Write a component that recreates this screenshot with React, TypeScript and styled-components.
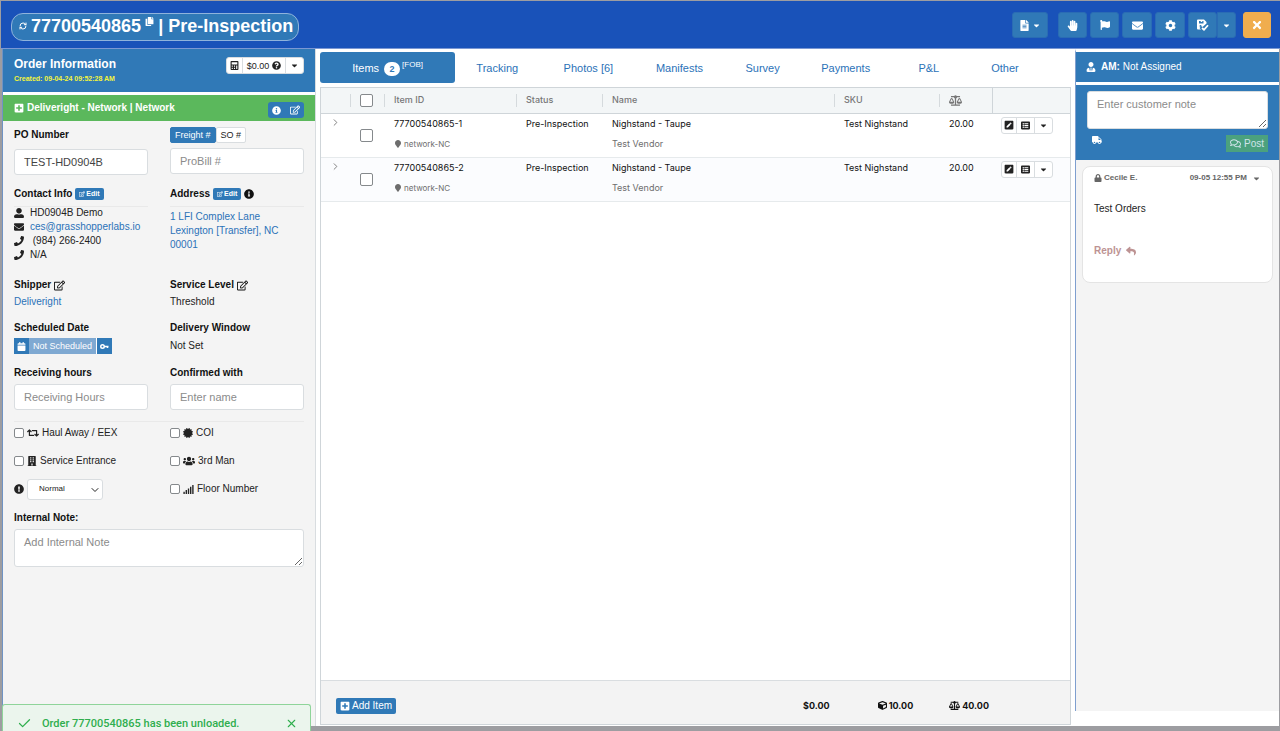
import React from 'react';
import styled, { createGlobalStyle } from 'styled-components';
import {
  FaCopy, FaFileAlt, FaCaretDown, FaHandPaper, FaFlag, FaEnvelope, FaCog, FaTimes, FaCalculator,
  FaQuestionCircle, FaPlusSquare, FaInfoCircle, FaRegEdit, FaUserAlt, FaUserTie, FaPhone, FaCalendar, FaRetweet,
  FaCertificate, FaBuilding, FaUsers, FaSignal, FaExclamationCircle, FaBalanceScale, FaMapMarker,
  FaPenSquare, FaListAlt, FaCube, FaTruck, FaRegComments, FaLock, FaReply,
} from 'react-icons/fa';
import { LuRefreshCw, LuChevronRight, LuChevronDown, LuCheck, LuX } from 'react-icons/lu';

const blue = '#3079b7';
const line = '#d9dde0';

const GlobalStyle = createGlobalStyle`
  *, *::before, *::after { box-sizing: border-box; }
  body { margin: 0; background: #9d9da1; }
  body, button, input, textarea, select {
    font-family: "Liberation Sans", Arial, sans-serif;
    font-size: 10px;
    line-height: 14px;
    color: #222;
  }
  button { cursor: pointer; }
  a { color: #2b72b8; text-decoration: none; }
  svg { flex: none; }
`;

const Page = styled.div`
  display: flex;
  flex-direction: column;
  min-height: 100vh;
  padding: 1px 0 5px 1px;
`;

const TopBar = styled.header`
  display: flex;
  align-items: center;
  justify-content: space-between;
  height: 48px;
  padding: 0 9px 0 10px;
  background: #1952b9;
  border-bottom: 1px solid #7b98d3;
`;

const TitlePill = styled.h1`
  display: flex;
  align-items: center;
  gap: 4px;
  height: 28px;
  margin: 4px 0 0;
  padding: 0 5px 2px 7px;
  border: 1px solid #8fb3dc;
  border-radius: 12px;
  background: ${blue};
  color: #fff;
  font-size: 18px;
  line-height: 24px;
`;

const IconButton = styled.button`
  display: flex;
  padding: 0;
  border: 0;
  background: none;
  color: inherit;
`;

const CopyButton = styled(IconButton)`
  align-self: flex-start;
  margin-top: 3px;
`;

const Toolbar = styled.div`
  display: flex;
  gap: 3px;
  margin-top: 1px;
`;

const ToolButton = styled.button<{ $tone?: string; $width?: number }>`
  display: flex;
  align-items: center;
  justify-content: center;
  gap: 2px;
  width: ${(p) => p.$width ?? 29}px;
  height: 26px;
  padding: 0;
  border: 1px solid ${(p) => p.$tone ?? '#2a6cb4'};
  border-radius: 3px;
  background: ${(p) => p.$tone ?? blue};
  color: #fff;
`;

const ToolGroup = styled.div<{ $after?: number }>`
  display: flex;
  margin-right: ${(p) => p.$after ?? 0}px;
  ${ToolButton} + ${ToolButton} { border-radius: 0 3px 3px 0; }
`;

const Workspace = styled.div`
  display: flex;
  flex: 1;
  margin: 0 1px;
  background: #fff;
`;

const OrderPanel = styled.aside`
  display: flex;
  flex-direction: column;
  width: 314px;
  border-left: 1px solid #6f93c4;
  border-right: 1px solid ${line};
  background: #f4f4f4;
`;

const OrderHead = styled.div`
  display: flex;
  justify-content: space-between;
  height: 43px;
  padding: 8px 11px 0;
  background: ${blue};
  color: #fff;
`;

const OrderTitle = styled.h2`
  margin: 0;
  font-size: 12px;
  line-height: 15px;
`;

const Created = styled.p`
  margin: 3px 0 0;
  color: #f4f53a;
  font-size: 7px;
  font-weight: bold;
  line-height: 8px;
`;

const SplitGroup = styled.div`
  display: flex;
  align-self: flex-start;
  width: fit-content;
  border: 1px solid ${line};
  border-radius: 3px;
  background: #fff;
`;

const SplitButton = styled.button<{ $width: number }>`
  display: flex;
  align-items: center;
  justify-content: center;
  gap: 3px;
  width: ${(p) => p.$width}px;
  height: 15px;
  padding: 0;
  border: 0;
  background: none;
  font-size: 9px;
  color: #222;
  & + & { border-left: 1px solid ${line}; }
`;

const Carrier = styled.div`
  display: flex;
  align-items: center;
  justify-content: space-between;
  height: 29px;
  padding: 0 11px;
  border-top: 3px solid #fff;
  background: #5bb85c;
  color: #fff;
  font-weight: bold;
`;

const CarrierName = styled.span`
  display: flex;
  align-items: center;
  gap: 3px;
`;

const CarrierActions = styled.div`
  display: flex;
  align-items: center;
  justify-content: space-around;
  width: 36px;
  height: 16px;
  margin-top: 4px;
  border-radius: 3px;
  background: ${blue};
`;

const Form = styled.form`
  display: flex;
  flex-direction: column;
  padding: 6px 11px 0;
`;

const Pair = styled.div<{ $after?: number }>`
  display: grid;
  grid-template-columns: 1fr 1fr;
  column-gap: 22px;
  margin-bottom: ${(p) => p.$after ?? 0}px;
`;

const Options = styled(Pair)`
  grid-auto-rows: 22px;
  row-gap: 6px;
`;

const Field = styled.div<{ $gap?: number }>`
  display: flex;
  flex-direction: column;
  align-items: flex-start;
  gap: ${(p) => p.$gap ?? 1}px;
  min-width: 0;
`;

const NoteField = styled(Field)`
  align-items: stretch;
`;

const Label = styled.label`
  display: flex;
  align-items: center;
  gap: 3px;
  height: 16px;
  font-weight: bold;
  color: #111;
`;

const LabelRow = styled(Label).attrs({ as: 'div' })<{ $ruled?: boolean }>`
  width: 100%;
  height: ${(p) => (p.$ruled ? 21 : 16)}px;
  padding-bottom: ${(p) => (p.$ruled ? 5 : 0)}px;
  border-bottom: ${(p) => (p.$ruled ? '1px solid #e9e9e9' : '0')};
`;

const TextInput = styled.input`
  width: 100%;
  height: 26px;
  padding: 0 9px;
  border: 1px solid ${line};
  border-radius: 3px;
  background: #fff;
  font-size: 11px;
  color: #444;
  &::placeholder { color: #8b8b8b; }
`;

const TextArea = styled.textarea`
  display: block;
  width: 100%;
  height: 38px;
  padding: 5px 9px;
  border: 1px solid ${line};
  border-radius: 3px;
  background: #fff;
  font-size: 11px;
  resize: vertical;
  &::placeholder { color: #8b8b8b; }
`;

const Toggle = styled.button<{ $on?: boolean }>`
  height: 16px;
  padding: 0 4px;
  border: 1px solid ${(p) => (p.$on ? blue : line)};
  border-radius: 2px;
  background: ${(p) => (p.$on ? blue : '#fff')};
  color: ${(p) => (p.$on ? '#fff' : '#222')};
  font-size: 9px;
  line-height: 12px;
`;

const ToggleRow = styled.div`
  display: flex;
`;

const EditButton = styled.button`
  display: flex;
  align-items: center;
  gap: 1px;
  height: 12px;
  padding: 0 4px;
  border: 0;
  border-radius: 2px;
  background: ${blue};
  color: #fff;
  font-size: 7px;
  font-weight: bold;
`;

const ContactList = styled.ul`
  margin: -2px 0 0;
  padding: 0;
  list-style: none;
`;

const ContactItem = styled.li`
  display: flex;
  align-items: center;
  gap: 6px;
  height: 14px;
`;

const Address = styled.a`
  margin-top: 2px;
`;

const Value = styled.span`
  line-height: 16px;
`;

const Schedule = styled.div`
  display: flex;
  height: 16px;
`;

const SchedulePart = styled.button<{ $muted?: boolean }>`
  display: flex;
  align-items: center;
  padding: 0 ${(p) => (p.$muted ? 4 : 3)}px;
  border: 0;
  background: ${(p) => (p.$muted ? '#7fa9d2' : blue)};
  color: #fff;
  font-size: 9px;
  & + & { border-right: 1px solid #fff; }
  & + & + & { border-right: 0; }
`;

const Rule = styled.hr`
  width: 100%;
  height: 1px;
  margin: 0;
  border: 0;
  background: #e9e9e9;
`;

const Check = styled.input.attrs({ type: 'checkbox' })<{ $size?: number }>`
  appearance: none;
  flex: none;
  display: block;
  width: ${(p) => p.$size ?? 10}px;
  height: ${(p) => p.$size ?? 10}px;
  margin: 0;
  border: 1px solid #85898c;
  border-radius: 2px;
  background: #fff;
`;

const Option = styled.label`
  display: flex;
  align-items: center;
  gap: 3px;
`;

const SelectBox = styled.span`
  position: relative;
  display: flex;
  width: 76px;
  svg { position: absolute; right: 2px; top: 5px; pointer-events: none; }
`;

const Select = styled.select`
  appearance: none;
  width: 100%;
  height: 21px;
  padding: 0 11px;
  border: 1px solid ${line};
  border-radius: 3px;
  background: #fff;
  font-size: 8px;
`;

const Center = styled.main`
  display: flex;
  flex: 1;
  flex-direction: column;
  min-width: 0;
  padding: 3px 4px 1px;
`;

const Tabs = styled.nav`
  display: flex;
  align-items: center;
  height: 31px;
  margin-bottom: 4px;
  padding-right: 31px;
  font-size: 11px;
`;

const Tab = styled.a<{ $grow: number; $active?: boolean }>`
  display: flex;
  flex: ${(p) => p.$grow} 1 0;
  align-items: center;
  justify-content: center;
  height: 31px;
  border-radius: 3px;
  background: ${(p) => (p.$active ? blue : 'none')};
  color: ${(p) => (p.$active ? '#fff' : '#2b72b8')};
`;

const Count = styled.span`
  width: 16px;
  margin: 2px 2px 0 5px;
  border-radius: 8px;
  background: #fff;
  color: ${blue};
  font-size: 9px;
  font-weight: bold;
  line-height: 14px;
  text-align: center;
`;

const Fob = styled.span`
  font-size: 8px;
  line-height: 20px;
  height: 28px;
  padding-top: 1px;
`;

const Grid = styled.div`
  display: flex;
  flex: 1;
  flex-direction: column;
  border: 1px solid #cfd5d9;
  font-family: Inter, sans-serif;
`;

const Table = styled.table`
  width: 100%;
  table-layout: fixed;
  border-collapse: collapse;
`;

const Th = styled.th<{ $line?: boolean; $width?: number }>`
  width: ${(p) => (p.$width ? `${p.$width}px` : 'auto')};
  height: 25px;
  padding: 0;
  border-bottom: 1px solid #cfd5d9;
  border-right: ${(p) => (p.$line ? '1px solid #cfd5d9' : '0')};
  background: #f3f6f7;
  color: #777;
  font-size: 9px;
  font-weight: 500;
  text-align: left;
`;

const ThInner = styled.div<{ $last?: boolean }>`
  display: flex;
  align-items: center;
  height: 13px;
  padding-left: 9px;
  border-right: ${(p) => (p.$last ? '0' : '1px solid #d5dadd')};
`;

const Row = styled.tr`
  height: 44px;
  border-bottom: 1px solid #e6eaec;
  &:nth-child(even) { background: #fbfcfe; }
`;

const Td = styled.td`
  padding: 3px 0 0 9px;
  color: #111;
  font-size: 9px;
  vertical-align: top;
`;

const Sub = styled.div<{ $small?: boolean }>`
  display: flex;
  align-items: center;
  gap: 2px;
  margin-top: 6px;
  color: #6d6d6d;
  font-size: ${(p) => (p.$small ? 8 : 9)}px;
`;

const CheckCell = styled.div`
  padding-top: 12px;
`;

const GridFooter = styled.footer`
  display: flex;
  align-items: center;
  height: 44px;
  margin-top: auto;
  padding: 6px 81px 0 15px;
  border-top: 1px solid ${line};
  background: #f3f3f3;
`;

const AddButton = styled.button`
  display: flex;
  align-items: center;
  gap: 2px;
  height: 16px;
  margin-right: auto;
  padding: 0 4px;
  border: 0;
  border-radius: 2px;
  background: ${blue};
  color: #fff;
`;

const Total = styled.span`
  display: flex;
  align-items: center;
  gap: 2px;
  margin-left: 36px;
  color: #111;
  font-size: 9px;
  font-weight: 700;
  &:first-of-type { margin-right: 12px; }
`;

const NotesPanel = styled.aside`
  display: flex;
  flex-direction: column;
  width: 204px;
  margin-bottom: 15px;
  border-top: 3px solid #fff;
  border-left: 1px solid #7f9fcf;
  background: #f4f4f4;
`;

const Manager = styled.div`
  display: flex;
  align-items: center;
  gap: 5px;
  height: 33px;
  padding-left: 10px;
  border-bottom: 3px solid #fff;
  background: ${blue};
  color: #fff;
`;

const Compose = styled.form`
  height: 75px;
  padding: 6px 11px 0;
  background: ${blue};
`;

const ComposeActions = styled.div`
  display: flex;
  justify-content: space-between;
  padding: 6px 0 0 5px;
  color: #fff;
`;

const PostButton = styled.button`
  display: flex;
  align-items: center;
  gap: 3px;
  height: 17px;
  padding: 0 4px;
  border: 0;
  background: #4ba17e;
  color: #cfe3ea;
`;

const Note = styled.article`
  height: 117px;
  margin: 6px;
  padding: 4px 11px;
  border: 1px solid #e4e4e4;
  border-radius: 8px;
  background: #fff;
`;

const NoteHead = styled.div`
  display: flex;
  align-items: center;
  gap: 2px;
  color: #666;
  font-size: 8px;
  font-weight: bold;
  time { margin-left: auto; margin-right: 3px; }
`;

const NoteBody = styled.p`
  margin: 17px 0 28px;
`;

const ReplyButton = styled(IconButton)`
  align-items: center;
  gap: 5px;
  color: #bd9393;
  font-weight: bold;
`;

const Toast = styled.div`
  position: fixed;
  left: 2px;
  bottom: 0;
  display: flex;
  align-items: center;
  width: 309px;
  height: 27px;
  padding: 11px 12px 0 14px;
  border: 1px solid #8fd49a;
  border-bottom: 0;
  border-radius: 3px 3px 0 0;
  background: #ebf5ed;
  color: #2fae4e;
  font-family: Roboto, sans-serif;
  font-size: 11px;
  font-weight: 500;
`;

const ToastText = styled.span`
  flex: 1;
  margin-left: 10px;
`;

const SaveCheckIcon = () => (
  <svg width="13" height="12" viewBox="0 0 26 24">
    <path
      fill="#fff"
      fillRule="evenodd"
      d="M4 1H16L21 6V9L13 16L11 14L7 18L10 21H4Q2 21 2 19V3Q2 1 4 1ZM6 4V9H15V4ZM9 12A2 2 0 1 0 9 16A2 2 0 1 0 9 12Z"
    />
    <path d="M11 2V6" stroke="#fff" strokeWidth="3" />
    <path d="M12 18L16 21.500L24 12.500" fill="none" stroke="#fff" strokeWidth="3.600" />
  </svg>
);

const KeyIcon = () => (
  <svg width="9" height="7" viewBox="0 0 18 14" fill="none" stroke="#fff" strokeWidth="3">
    <circle cx="5" cy="7" r="3.500" />
    <path d="M8.500 7H17M15 7V10" />
  </svg>
);

const items = [
  { id: '77700540865-1', hub: 'network-NC', status: 'Pre-Inspection', name: 'Nighstand - Taupe', vendor: 'Test Vendor', sku: 'Test Nighstand', weight: '20.00' },
  { id: '77700540865-2', hub: 'network-NC', status: 'Pre-Inspection', name: 'Nighstand - Taupe', vendor: 'Test Vendor', sku: 'Test Nighstand', weight: '20.00' },
];

const tabs = [
  { name: 'Tracking', grow: 84 },
  { name: 'Photos [6]', grow: 98 },
  { name: 'Manifests', grow: 84 },
  { name: 'Survey', grow: 82 },
  { name: 'Payments', grow: 84 },
  { name: 'P&L', grow: 82 },
  { name: 'Other', grow: 70 },
];

const Edit = () => <EditButton type="button"><FaRegEdit size={6} />Edit</EditButton>;

export default function App() {
  return (
    <>
      <GlobalStyle />
      <Page>
        <TopBar>
          <TitlePill>
            <IconButton aria-label="Refresh"><LuRefreshCw size={8} strokeWidth={3} /></IconButton>
            <span>77700540865</span>
            <CopyButton aria-label="Copy order number"><FaCopy size={9} /></CopyButton>
            <span>| Pre-Inspection</span>
          </TitlePill>
          <Toolbar>
            <ToolGroup $after={7}><ToolButton $width={36} aria-label="Documents"><FaFileAlt size={11} /><FaCaretDown size={9} /></ToolButton></ToolGroup>
            <ToolButton aria-label="Hold"><FaHandPaper size={11} /></ToolButton>
            <ToolButton aria-label="Flag"><FaFlag size={10} /></ToolButton>
            <ToolButton $width={30} aria-label="Email"><FaEnvelope size={11} /></ToolButton>
            <ToolButton $width={30} aria-label="Settings"><FaCog size={11} /></ToolButton>
            <ToolGroup $after={4}>
              <ToolButton aria-label="Save"><SaveCheckIcon /></ToolButton>
              <ToolButton $width={19} aria-label="Save options"><FaCaretDown size={9} /></ToolButton>
            </ToolGroup>
            <ToolButton $tone="#f0ad4e" $width={28} aria-label="Close"><FaTimes size={12} /></ToolButton>
          </Toolbar>
        </TopBar>

        <Workspace>
          <OrderPanel>
            <OrderHead>
              <div>
                <OrderTitle>Order Information</OrderTitle>
                <Created>Created: 09-04-24 09:52:28 AM</Created>
              </div>
              <SplitGroup>
                <SplitButton $width={15} aria-label="Calculate"><FaCalculator size={9} /></SplitButton>
                <SplitButton $width={43}>$0.00 <FaQuestionCircle size={9} /></SplitButton>
                <SplitButton $width={18} aria-label="More"><FaCaretDown size={9} /></SplitButton>
              </SplitGroup>
            </OrderHead>
            <Carrier>
              <CarrierName><FaPlusSquare size={10} />Deliveright - Network | Network</CarrierName>
              <CarrierActions>
                <IconButton aria-label="Carrier details"><FaInfoCircle size={9} /></IconButton>
                <IconButton aria-label="Edit carrier"><FaRegEdit size={10} /></IconButton>
              </CarrierActions>
            </Carrier>

            <Form>
              <Pair $after={11}>
                <Field $gap={6}>
                  <Label htmlFor="po">PO Number</Label>
                  <TextInput id="po" defaultValue="TEST-HD0904B" />
                </Field>
                <Field $gap={5}>
                  <ToggleRow>
                    <Toggle type="button" $on>Freight #</Toggle>
                    <Toggle type="button">SO #</Toggle>
                  </ToggleRow>
                  <TextInput aria-label="ProBill number" placeholder="ProBill #" />
                </Field>
              </Pair>

              <Pair $after={15}>
                <Field>
                  <LabelRow $ruled>Contact Info <Edit /></LabelRow>
                  <ContactList>
                    <ContactItem><FaUserAlt size={10} />HD0904B Demo</ContactItem>
                    <ContactItem><FaEnvelope size={10} /><a href="#mail">ces@grasshopperlabs.io</a></ContactItem>
                    <ContactItem><FaPhone size={10} />&nbsp;(984) 266-2400</ContactItem>
                    <ContactItem><FaPhone size={10} />N/A</ContactItem>
                  </ContactList>
                </Field>
                <Field>
                  <LabelRow $ruled>Address <Edit /> <FaInfoCircle size={10} /></LabelRow>
                  <Address href="#address">1 LFI Complex Lane<br />Lexington [Transfer], NC<br />00001</Address>
                </Field>
              </Pair>

              <Pair $after={10}>
                <Field>
                  <LabelRow>Shipper <FaRegEdit size={11} /></LabelRow>
                  <Value><a href="#shipper">Deliveright</a></Value>
                </Field>
                <Field>
                  <LabelRow>Service Level <FaRegEdit size={11} /></LabelRow>
                  <Value>Threshold</Value>
                </Field>
              </Pair>

              <Pair $after={11}>
                <Field $gap={2}>
                  <LabelRow>Scheduled Date</LabelRow>
                  <Schedule>
                    <SchedulePart type="button" aria-label="Pick date"><FaCalendar size={9} /></SchedulePart>
                    <SchedulePart type="button" $muted>Not Scheduled</SchedulePart>
                    <SchedulePart type="button" aria-label="Unlock"><KeyIcon /></SchedulePart>
                  </Schedule>
                </Field>
                <Field $gap={2}>
                  <LabelRow>Delivery Window</LabelRow>
                  <Value>Not Set</Value>
                </Field>
              </Pair>

              <Pair $after={11}>
                <Field $gap={3}>
                  <Label htmlFor="hours">Receiving hours</Label>
                  <TextInput id="hours" placeholder="Receiving Hours" />
                </Field>
                <Field $gap={3}>
                  <Label htmlFor="confirmed">Confirmed with</Label>
                  <TextInput id="confirmed" placeholder="Enter name" />
                </Field>
              </Pair>
              <Rule />

              <Options $after={10}>
                <Option><Check /><FaRetweet size={12} />Haul Away / EEX</Option>
                <Option><Check /><FaCertificate size={10} />COI</Option>
                <Option><Check /><FaBuilding size={10} />Service Entrance</Option>
                <Option><Check /><FaUsers size={12} />3rd Man</Option>
                <Option>
                  <FaExclamationCircle size={10} />
                  <SelectBox>
                    <Select aria-label="Priority"><option>Normal</option></Select>
                    <LuChevronDown size={12} />
                  </SelectBox>
                </Option>
                <Option><Check /><FaSignal size={11} />Floor Number</Option>
              </Options>

              <NoteField $gap={3}>
                <Label htmlFor="note">Internal Note:</Label>
                <TextArea id="note" placeholder="Add Internal Note" />
              </NoteField>
            </Form>
          </OrderPanel>

          <Center>
            <Tabs>
              <Tab href="#items" $grow={135} $active>Items<Count>2</Count><Fob>[FOB]</Fob></Tab>
              {tabs.map((t) => <Tab key={t.name} href="#tab" $grow={t.grow}>{t.name}</Tab>)}
            </Tabs>
            <Grid>
              <Table>
                <thead>
                  <tr>
                    <Th $width={30}><ThInner /></Th>
                    <Th $width={34}><ThInner><Check $size={13} aria-label="Select all" /></ThInner></Th>
                    <Th $width={132}><ThInner>Item ID</ThInner></Th>
                    <Th $width={86}><ThInner>Status</ThInner></Th>
                    <Th><ThInner>Name</ThInner></Th>
                    <Th $width={105}><ThInner>SKU</ThInner></Th>
                    <Th $width={52} $line><ThInner $last><FaBalanceScale size={13} /></ThInner></Th>
                    <Th $width={78}><ThInner $last /></Th>
                  </tr>
                </thead>
                <tbody>
                  {items.map((it) => (
                    <Row key={it.id}>
                      <Td><IconButton aria-label="Expand"><LuChevronRight size={11} color="#777" /></IconButton></Td>
                      <Td><CheckCell><Check $size={13} aria-label={`Select ${it.id}`} /></CheckCell></Td>
                      <Td>{it.id}<Sub $small><FaMapMarker size={8} />{it.hub}</Sub></Td>
                      <Td>{it.status}</Td>
                      <Td>{it.name}<Sub>{it.vendor}</Sub></Td>
                      <Td>{it.sku}</Td>
                      <Td>{it.weight}</Td>
                      <Td>
                        <SplitGroup>
                          <SplitButton $width={14} aria-label="Edit item"><FaPenSquare size={10} /></SplitButton>
                          <SplitButton $width={18} aria-label="Item details"><FaListAlt size={9} /></SplitButton>
                          <SplitButton $width={18} aria-label="More"><FaCaretDown size={9} /></SplitButton>
                        </SplitGroup>
                      </Td>
                    </Row>
                  ))}
                </tbody>
              </Table>
              <GridFooter>
                <AddButton><FaPlusSquare size={10} />Add Item</AddButton>
                <Total>$0.00</Total>
                <Total><FaCube size={9} />10.00</Total>
                <Total><FaBalanceScale size={11} />40.00</Total>
              </GridFooter>
            </Grid>
          </Center>

          <NotesPanel>
            <Manager><FaUserTie size={10} /><span><b>AM:</b> Not Assigned</span></Manager>
            <Compose>
              <TextArea aria-label="Customer note" placeholder="Enter customer note" />
              <ComposeActions>
                <FaTruck size={10} />
                <PostButton type="button"><FaRegComments size={11} />Post</PostButton>
              </ComposeActions>
            </Compose>
            <Note>
              <NoteHead><FaLock size={8} />Cecile E.<time>09-05 12:55 PM</time><IconButton aria-label="Note options"><FaCaretDown size={9} /></IconButton></NoteHead>
              <NoteBody>Test Orders</NoteBody>
              <ReplyButton>Reply <FaReply size={10} /></ReplyButton>
            </Note>
          </NotesPanel>
        </Workspace>
      </Page>
      <Toast role="status">
        <LuCheck size={15} />
        <ToastText>Order 77700540865 has been unloaded.</ToastText>
        <IconButton aria-label="Dismiss"><LuX size={13} /></IconButton>
      </Toast>
    </>
  );
}
